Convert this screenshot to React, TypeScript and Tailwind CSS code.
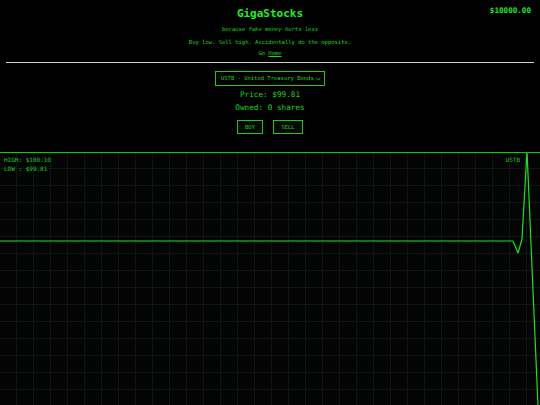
import React from "react";

const mono = { fontFamily: '"DejaVu Sans Mono", "Liberation Mono", monospace' };

function Chart() {
  // data points in chart coordinates (0,0 = just under the top border)
  const points = "0,88 513,88 518,100 522,86 527,-2 538,253 541,290";
  return (
    <div className="relative h-[253px] border-t border-[#11c611] bg-[#040404] bg-[linear-gradient(to_right,#0a1813_1px,transparent_1px),linear-gradient(to_bottom,#0a1813_1px,transparent_1px)] bg-[size:17px_17px] bg-[position:16px_15px] overflow-hidden">
      <svg className="absolute inset-0" width="540" height="253" viewBox="0 0 540 253">
        <polyline points={points} fill="none" stroke="#22e022" strokeWidth="1.2" strokeLinejoin="round" />
      </svg>
      {/* labels sit over the plot */}
      <div className="absolute left-[4px] top-[2px] text-[6px] leading-[9px] text-[#1cc81c]">
        <div>HIGH: $100.10</div>
        <div>LOW : $99.81</div>
      </div>
      <div className="absolute right-[20px] top-[2px] text-[6px] leading-[9px] text-[#1cc81c]">USTB</div>
    </div>
  );
}

export default function App() {
  return (
    <div className="w-[540px] h-[405px] bg-black text-[#1ed41e] overflow-hidden" style={mono}>
      <div className="relative flex flex-col items-center">
        <div className="absolute right-[9px] top-[6px] text-[7.6px] leading-[10px] font-bold text-[#22e622]">$10000.00</div>
        <h1 className="mt-[7px] text-[11px] leading-[14px] font-bold text-[#22ee22]">GigaStocks</h1>
        <p className="mt-[4px] text-[5.5px] leading-[8px] italic">because fake money hurts less</p>
        <p className="mt-[5px] text-[5.5px] leading-[8px]">Buy low. Sell high. Accidentally do the opposite.</p>
        <p className="mt-[3px] text-[5.5px] leading-[8px]">
          Go <span className="underline">Home</span>
        </p>
      </div>
      <div className="mx-[6px] mt-[5px] h-px bg-[#cfcfcf]" />

      <div className="flex flex-col items-center">
        <div className="mt-[8px] w-[110px] h-[15px] border border-[#1ec81e] bg-black flex items-center justify-between pl-[5px] pr-[3px] text-[5.5px]">
          <span>USTB - United Treasury Bonds</span>
          <svg width="5" height="4" viewBox="0 0 5 4">
            <path d="M0.5 0.8 L2.5 3 L4.5 0.8" fill="none" stroke="#1ed41e" strokeWidth="0.9" />
          </svg>
        </div>
        <div className="mt-[4px] text-[7.7px] leading-[10px]">Price: $99.81</div>
        <div className="mt-[3px] text-[7.7px] leading-[10px]">Owned: 0 shares</div>
        <div className="mt-[7px] flex gap-[10px]">
          <button className="w-[26px] h-[14px] border border-[#1ec81e] bg-[#050805] text-[5.5px] text-[#1ed41e]">BUY</button>
          <button className="w-[30px] h-[14px] border border-[#1ec81e] bg-[#050805] text-[5.5px] text-[#1ed41e]">SELL</button>
        </div>
      </div>

      <div className="mt-[18px]">
        <Chart />
      </div>
    </div>
  );
}
